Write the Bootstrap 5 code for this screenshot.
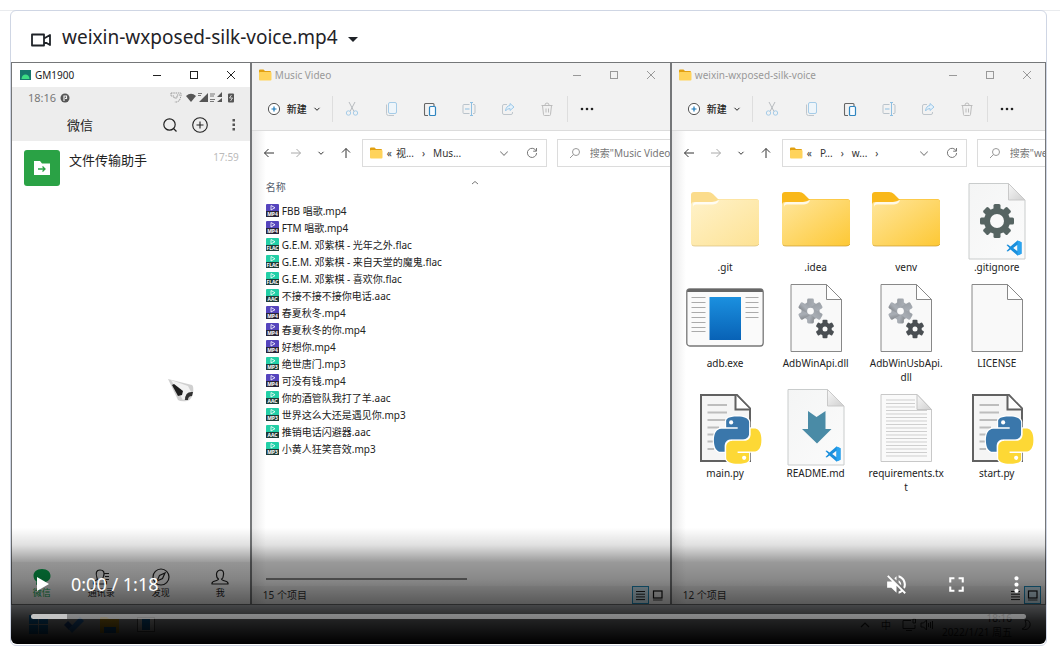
<!DOCTYPE html>
<html lang="zh-CN">
<head>
<meta charset="utf-8">
<meta name="viewport" content="width=device-width, initial-scale=1">
<title>weixin-wxposed-silk-voice.mp4</title>
<link rel="stylesheet" href="https://cdn.jsdelivr.net/npm/bootstrap@5.3.0/dist/css/bootstrap.min.css">
<script src="https://cdn.jsdelivr.net/npm/bootstrap@5.3.0/dist/js/bootstrap.bundle.min.js"></script>
<style>
body{font-family:"Noto Sans","Noto Sans CJK SC",sans-serif;color:#1f2328;background:#fff}
button{background:none;border:0;padding:0;color:inherit;display:flex;align-items:center;justify-content:center}
svg{display:block;flex:none}
.page{border-top:1px solid #e9ebee;margin-top:10px;padding:0 13px 0 10px}
.video-card{border:1px solid #cfd6e4;border-radius:6px;margin-top:-1px;background:#fff;padding-bottom:1px}
.file-head{height:51px;padding:2px 20px 0;gap:11px}
.file-head button{font-size:19px;gap:10px}
.caret{border:5px solid transparent;border-top-color:#1f2328;border-bottom:0;margin-top:3px}
.player{aspect-ratio:1035/582;overflow:hidden;border-radius:0 0 6px 6px;font-size:10px;line-height:14px;color:#222}
.desk{flex:1;min-height:0;border:1px solid #757779}
.phone{flex:239;min-width:0}
.win{flex:420;min-width:0;border-left:2px solid #757779;overflow:hidden}
.win.narrow{flex:375}
.titlebar{height:24px;flex:none}
.win .titlebar,.tools{background:#f2f2f2;color:#999}
.win .titlebar{padding-left:6px}
.win .titlebar span{margin-left:3px}
.wbtn{width:37px;height:22px}
.phone-top{background:#ededed;flex:none}
.status-row{height:21px;padding:0 14px 0 16px;color:#777;font-size:11px}
.app-row{height:33px;font-size:13px;padding:0 11px 0 55px}
.plus-btn{margin:0 21px 0 14px}
.avatar{width:36px;height:36px;background:#2aa245;border-radius:3px}
.chat{padding:9px 11px 0 12px;gap:9px}
.chat .who{font-size:13px;line-height:20px}
.chat .when{color:#bbb;font-size:10px}
.tabs-row{height:42px;background:#f7f7f7;flex:none}
.tabs-row button{flex-direction:column;gap:1px;flex:1;font-size:9px;line-height:12px;justify-content:start;padding-top:6px}
.tabs-row .current{color:#07a850}
.tools{height:44px;flex:none;border-bottom:1px solid #dcdcdc;padding-left:17px}
.tools .sep{width:1px;height:26px;background:#dedede}
.new-btn{gap:6px;color:#222;width:50px;margin-right:13px}
.tool{width:39px;height:28px}
.addr{height:44px;flex:none;background:linear-gradient(90deg,#e9e9e9,#fff 14px);color:#333}
.navs{width:110px;padding:0 10px 0 11px;flex:none}
.crumbs{border:1px solid #dcdcdc;width:185px;height:28px;padding:0 8px 0 6px;flex:none;background:#fff}
.search-box{border:1px solid #dcdcdc;height:28px;width:150px;flex:none;margin-left:10px;padding-left:11px;gap:9px;background:#fff}
.search-box input{border:0;outline:0;background:none;width:110px;padding:0;font-size:10px;color:#666}
.search-box input::placeholder{color:#777;opacity:1}
.pane{flex:1;min-height:0;background:linear-gradient(90deg,#e9e9e9,#fff 14px);padding-left:14px}
.names{margin:0;padding:0;list-style:none}
.names li{height:17px;gap:3px;white-space:nowrap;display:flex;align-items:center}
.colhead{color:#55606e;padding-top:5px;height:27px}
.sort-mark{margin-right:191px}
.tiles{display:grid;grid-template-columns:repeat(4,1fr);row-gap:4px;padding:7px 3px 0 8px;align-content:start}
.tile{text-align:center;overflow-wrap:anywhere}
.tile svg{margin:0 auto}
.tile span{display:block;padding:0 6px}
.statusbar{height:18px;flex:none;background:linear-gradient(90deg,#e0e0e0,#f5f5f5 14px);padding-left:11px;color:#333}
.vbtn{width:17px;height:18px;border:1px solid transparent}
.vbtn.on{border-color:#1e8fc0;background:#cfe9f5}
.hbar{height:2px;width:201px;background:#8a8a8a;margin-bottom:6px}
.taskbar{height:39px;flex:none;background:#c6cacf;padding:0 15px 0 9px}
.taskbar .app{width:36px;height:36px}
.tray{gap:11px}
.shade{inset:0;background:linear-gradient(180deg,transparent 80%,rgba(0,0,0,.12) 83%,rgba(0,0,0,.4) 86%,rgba(0,0,0,.47) 89%,rgba(0,0,0,.63) 93%,rgba(0,0,0,.84) 96%,#000 100%)}
.bar{height:30px;padding:0 0 0 14px;color:#fff}
.bar .clock{font-size:18px;line-height:30px;margin-left:14px}
.bar .ctl{width:60px;height:30px}
.seek{appearance:none;-webkit-appearance:none;display:block;height:5px;margin:15px 20px 25px;width:calc(100% - 40px);border-radius:3px;background:linear-gradient(90deg,#c2c2c2 36px,rgba(255,255,255,.42) 36px)}
.seek::-webkit-slider-thumb{-webkit-appearance:none;width:1px;height:5px;opacity:0}
.pointer{left:157px;top:316px}
</style>
</head>
<body>
<svg width="0" height="0" class="position-absolute" aria-hidden="true">
<defs>
<linearGradient id="gy" x2="1" y2="1"><stop stop-color="#ffe69b"/><stop offset="1" stop-color="#fdc835"/></linearGradient>
<linearGradient id="gp" x2="1" y2="1"><stop stop-color="#fff2c9"/><stop offset="1" stop-color="#fde294"/></linearGradient>
<linearGradient id="gb" x2="0" y2="1"><stop stop-color="#1b90df"/><stop offset="1" stop-color="#0862b6"/></linearGradient>
<linearGradient id="gg" x2="1" y2="1"><stop stop-color="#9a9fa5"/><stop offset=".6" stop-color="#a9aeb5"/><stop offset="1" stop-color="#85898e"/></linearGradient>
<linearGradient id="gw" x2="1" y2="1"><stop stop-color="#f4f5f5"/><stop offset="1" stop-color="#fbfbfb"/></linearGradient>
<linearGradient id="gc" x1="0" x2="1" y2="1"><stop stop-color="#f8f8f8"/><stop offset="1" stop-color="#cfcfcf"/></linearGradient>
</defs>
<symbol id="min" viewBox="0 0 12 12"><path d="M2 6.500h8" fill="none" stroke="currentColor"/></symbol>
<symbol id="max" viewBox="0 0 12 12"><rect x="2.500" y="2.500" width="7" height="7" fill="none" stroke="currentColor"/></symbol>
<symbol id="cls" viewBox="0 0 12 12"><path d="M2 2l8 8M10 2l-8 8" fill="none" stroke="currentColor"/></symbol>
<symbol id="fold" viewBox="0 0 14 12"><path d="M1 1.500q0-1 1-1h3.500l1.500 1.500h5q1 0 1 1V6H1z" fill="#e2a112"/><rect x="1" y="3" width="12.500" height="8.500" rx="1" fill="#ffd35a"/></symbol>
<symbol id="plus" viewBox="0 0 14 14"><circle cx="7" cy="7" r="5.600" fill="#fff" stroke="#555"/><path d="M7 4.500v5M4.500 7h5" stroke="#1676b8" stroke-width="1.200"/></symbol>
<symbol id="down" viewBox="0 0 8 8"><path d="M1.500 2.800L4 5.300l2.500-2.500" fill="none" stroke="currentColor"/></symbol>
<symbol id="cut" viewBox="0 0 14 16"><path d="M4 1l5 9.500M10 1L5 10.500" fill="none" stroke="#b7bbbf"/><circle cx="3.500" cy="12" r="2.200" fill="none" stroke="#a5cce8"/><circle cx="10.500" cy="12" r="2.200" fill="none" stroke="#a5cce8"/></symbol>
<symbol id="copy" viewBox="0 0 14 16"><rect x="4.500" y="1.500" width="8" height="11" rx="1.500" fill="#eef5fa" stroke="#a5cce8"/><path d="M2.500 3.500v9q0 2 2 2h5.500" fill="none" stroke="#bfc6cc"/></symbol>
<symbol id="paste" viewBox="0 0 14 16"><path d="M5 14.500H2.500q-1 0-1-1v-10q0-1 1-1H10q1 0 1 1V5M4 2.500h4.500" fill="none" stroke="#666" stroke-width="1.100"/><rect x="6.500" y="5.500" width="6" height="9" rx="1" fill="#f7fbff" stroke="#2f86c0" stroke-width="1.200"/></symbol>
<symbol id="ren" viewBox="0 0 14 16"><path d="M7.500 3.500H2q-1 0-1 1v7q0 1 1 1h5.500M11 3.500h1q1 0 1 1v7q0 1-1 1h-1" fill="none" stroke="#b9c3cb"/><path d="M9.500 2v12M8 1.500h3M8 14.500h3M3 8h4.500" fill="none" stroke="#8dbfe2"/></symbol>
<symbol id="share" viewBox="0 0 14 16"><path d="M6 3.500H3q-1.500 0-1.500 1.500v7q0 1.500 1.500 1.500h7q1.500 0 1.500-1.500v-1" fill="none" stroke="#bfc6cc"/><path d="M9 2.500l4 3.500-4 3.500V7.500Q6 7.500 4.500 10 5 5 9 4.500z" fill="#e6f2fb" stroke="#9cc8e8"/></symbol>
<symbol id="bin" viewBox="0 0 14 16"><path d="M1.500 4.500h11M5 4q0-2 2-2t2 2M2.500 4.500l1 9q0 1 1 1h5q1 0 1-1l1-9M6 7.500v4M8.500 7.500v4" fill="none" stroke="#bcbcbc"/></symbol>
<symbol id="left" viewBox="0 0 12 12"><path d="M11 6H1.500M5.500 2l-4 4 4 4" fill="none" stroke="currentColor"/></symbol>
<symbol id="right" viewBox="0 0 12 12"><path d="M1 6h9.500M6.500 2l4 4-4 4" fill="none" stroke="#aaa"/></symbol>
<symbol id="up" viewBox="0 0 12 12"><path d="M6 11V1.500M2 5.500l4-4 4 4" fill="none" stroke="currentColor"/></symbol>
<symbol id="ref" viewBox="0 0 12 12"><path d="M10.200 4A4.600 4.600 0 1 0 10.600 6M10.500 1v3.200H7.200" fill="none" stroke="#777"/></symbol>
<symbol id="mag" viewBox="0 0 12 12"><circle cx="7" cy="5" r="3.500" fill="none" stroke="#999"/><path d="M4.500 7.500L1 11" stroke="#999"/></symbol>
<symbol id="mp4" viewBox="0 0 13 13"><rect width="13" height="13" rx="1" fill="#5544bd"/><path d="M5 1.500l4 2.200-4 2.300z" fill="none" stroke="#fff" stroke-width=".8"/><rect y="7" width="13" height="6" fill="#282438"/><text x="6.500" y="12" font-size="5" font-weight="700" text-anchor="middle" fill="#fff">MP4</text></symbol>
<symbol id="flac" viewBox="0 0 13 13"><rect width="13" height="13" rx="1" fill="#22cfa6"/><path d="M5 1.500l4 2.200-4 2.300z" fill="none" stroke="#fff" stroke-width=".8"/><rect y="7" width="13" height="6" fill="#1d3b38"/><text x="6.500" y="12" font-size="5" font-weight="700" text-anchor="middle" fill="#fff">FLAC</text></symbol>
<symbol id="aac" viewBox="0 0 13 13"><rect width="13" height="13" rx="1" fill="#22cfa6"/><path d="M5 1.500l4 2.200-4 2.300z" fill="none" stroke="#fff" stroke-width=".8"/><rect y="7" width="13" height="6" fill="#1d3b38"/><text x="6.500" y="12" font-size="5" font-weight="700" text-anchor="middle" fill="#fff">AAC</text></symbol>
<symbol id="mp3" viewBox="0 0 13 13"><rect width="13" height="13" rx="1" fill="#22cfa6"/><path d="M5 1.500l4 2.200-4 2.300z" fill="none" stroke="#fff" stroke-width=".8"/><rect y="7" width="13" height="6" fill="#1d3b38"/><text x="6.500" y="12" font-size="5" font-weight="700" text-anchor="middle" fill="#fff">MP3</text></symbol>
<symbol id="bigfold" viewBox="0 0 78 78"><path d="M5 13q0-3 3-3h14q3 0 5 2l5 5h38q3 0 3 3v10H5z" fill="#f9b81a"/><path d="M5 23q0-3 3-3h18q2 0 4-1l3-1.500h37q3 0 3 3V61q0 3-3 3H8q-3 0-3-3z" fill="url(#gy)"/><path d="M7 23q0-3 3-3h16q4 0 7-2-1 4-6 4.500H10q-3 0-3 3z" fill="#fff" opacity=".8"/><path d="M6 63q1 1 3 1h60q3 0 4-2" fill="none" stroke="#c99a2d" opacity=".7"/></symbol>
<symbol id="palefold" viewBox="0 0 78 78"><path d="M5 13q0-3 3-3h14q3 0 5 2l5 5h38q3 0 3 3v10H5z" fill="#fbdc8c"/><path d="M5 23q0-3 3-3h18q2 0 4-1l3-1.500h37q3 0 3 3V61q0 3-3 3H8q-3 0-3-3z" fill="url(#gp)"/><path d="M7 23q0-3 3-3h16q4 0 7-2-1 4-6 4.500H10q-3 0-3 3z" fill="#fff" opacity=".8"/><path d="M6 63q1 1 3 1h60q3 0 4-2" fill="none" stroke="#d8bf7d" opacity=".7"/></symbol>
<symbol id="gear8" viewBox="-18 -18 36 36"><g fill="#566462"><circle r="13"/><rect x="-3.500" y="-17" width="7" height="34" rx="1.500"/><rect x="-17" y="-3.500" width="34" height="7" rx="1.500"/><g transform="rotate(45)"><rect x="-3.500" y="-17" width="7" height="34" rx="1.500"/><rect x="-17" y="-3.500" width="34" height="7" rx="1.500"/></g></g><circle r="7" fill="#fafafa"/></symbol>
<symbol id="gear6" viewBox="-14 -14 28 28"><circle r="9.500"/><rect x="-3.500" y="-13" width="7" height="26" rx="1.500"/><rect x="-3.500" y="-13" width="7" height="26" rx="1.500" transform="rotate(60)"/><rect x="-3.500" y="-13" width="7" height="26" rx="1.500" transform="rotate(120)"/><circle r="3.500" fill="#fafafa"/></symbol>
<symbol id="vsc" viewBox="0 0 16 16"><path d="M11.500.5L15.500 2.300v11.400L11.500 15.500 4.500 9.500 1.800 11.600.5 11 3.500 8 .5 5l1.300-.6L4.500 6.500zM11.500 4.700L7.200 8l4.300 3.300z" fill="#1b8fdc" fill-rule="evenodd"/><path d="M11.500.5L15.500 2.300v11.400L11.500 15.500z" fill="#2aa4f0"/></symbol>
<symbol id="bigdoc" viewBox="0 0 78 78"><path d="M11 1.500h39.500L67 18v59H11z" fill="url(#gw)" stroke="#c9cccc"/><path d="M50.500 1.500L67 18H50.500z" fill="url(#gc)" stroke="#c9c9c9"/></symbol>
<symbol id="doc" viewBox="0 0 78 78"><path d="M14 6.500h35.500l15 15V73.500H14z" fill="#f9f9f9" stroke="#888"/><path d="M49.500 6.500v15h15z" fill="#fff" stroke="#888"/></symbol>
<symbol id="dll" viewBox="0 0 78 78"><use href="#doc" width="78" height="78"/><use href="#gear6" x="20" y="19.500" width="27" height="27" fill="url(#gg)"/><use href="#gear6" x="38" y="41" width="20" height="20" fill="#4a4f53"/></symbol>
<symbol id="exe" viewBox="0 0 78 78"><rect x=".8" y="11" width="76.400" height="57" rx="3" fill="#fafafa" stroke="#777" stroke-width="1.300"/><path d="M1 14q0-3 3-3h70q3 0 3 3z" fill="#666"/><rect x="23.500" y="19" width="31.500" height="43" fill="url(#gb)"/><path d="M5.500 19.500h14M5.500 24.500h14M5.500 29.500h14M5.500 34.500h14M5.500 39.500h14M5.500 44.500h14M5.500 49.500h14M5.500 53.500h14M59.500 19.500h13M59.500 24.500h13M59.500 29.500h13M59.500 34.500h13M59.500 39.500h13" stroke="#aaa"/></symbol>
<symbol id="gitig" viewBox="0 0 78 78"><use href="#bigdoc" width="78" height="78"/><use href="#gear8" x="21" y="21" width="36" height="36"/><use href="#vsc" x="48" y="58" width="16" height="16"/></symbol>
<symbol id="readme" viewBox="0 0 78 78"><use href="#bigdoc" width="78" height="78"/><path d="M31 23l8.500 6 9-6v18H54.500L40 55.500 25 41h6z" fill="#4a8ba6"/><use href="#vsc" x="48" y="58" width="16" height="16"/></symbol>
<symbol id="txt" viewBox="0 0 78 78"><path d="M14 6.500h36l14.500 15V73.500H14z" fill="#fafafa" stroke="#c8c8c8"/><path d="M19 12h29M19 15.500h29M19 19h29M19 22.500h41M19 26h41M19 29.500h41M19 33h41M19 36.500h41M19 40h41M19 43.500h41M19 47h41M19 50.500h41M19 54h41M19 57.500h41M19 61h41M19 64.500h41M19 68h41" stroke="#cfcfcf"/><path d="M50 6.500V21.500h14.500z" fill="url(#gc)" stroke="#c4c4c4"/></symbol>
<symbol id="py" viewBox="0 0 78 78"><path d="M15 7h36l13 13.500V73H15z" fill="#f5f5f5" stroke="#616161" stroke-width="2"/><path d="M49.500 7v14.500H64" fill="#fff" stroke="#616161" stroke-width="2"/><path d="M21.500 17H41M21.500 24.500H41M21.500 32H41M21.500 39.500H33M21.500 46.500H28M21.500 53.500H28M21.500 61H28" stroke="#bdbdbd" stroke-width="2"/>
<g transform="translate(28 28.500) scale(1.970)" stroke-linejoin="round"><path stroke="#fff" stroke-width="1.200" paint-order="stroke" fill="#3a77ab" d="M14.250.180l.9.200.730.260.590.300.450.320.340.340.250.340.160.330.1.300.040.260.020.200-.010.130V8.500l-.050.630-.130.550-.210.460-.260.380-.300.310-.330.250-.350.190-.350.140-.330.100-.300.070-.260.040-.210.020H8.770l-.690.050-.590.140-.500.220-.410.270-.330.320-.270.350-.200.360-.150.370-.100.350-.070.320-.040.270-.020.210v3.060H3.170l-.210-.030-.280-.070-.320-.120-.350-.180-.360-.260-.360-.360-.350-.460-.320-.590-.280-.730-.210-.880-.140-1.050-.050-1.230.060-1.220.160-1.040.240-.870.320-.710.360-.570.400-.440.420-.330.420-.240.400-.160.360-.100.320-.050.240-.010h.160l.060.010h8.160v-.830H6.180l-.010-2.750-.020-.370.050-.340.110-.310.170-.280.250-.260.310-.230.380-.200.440-.180.510-.150.580-.120.640-.100.710-.060.770-.040.840-.020 1.270.050z"/><path stroke="#fff" stroke-width="1.200" paint-order="stroke" fill="#fdd835" d="M21.040 6.110l.280.060.320.120.350.180.360.270.360.350.350.470.320.590.280.730.210.880.140 1.040.050 1.230-.060 1.230-.160 1.040-.240.860-.320.710-.360.570-.400.450-.420.330-.420.240-.400.160-.360.090-.320.050-.240.020-.160-.010h-8.220v.820h5.840l.010 2.760.020.360-.050.340-.110.310-.170.290-.250.250-.310.240-.380.200-.440.170-.510.150-.580.130-.640.090-.710.070-.770.040-.840.010-1.270-.040-1.070-.140-.900-.200-.730-.250-.590-.300-.450-.330-.340-.340-.250-.340-.160-.330-.100-.300-.040-.250-.020-.200.010-.130v-5.340l.050-.640.130-.540.210-.460.260-.380.300-.320.330-.240.350-.200.350-.140.330-.100.300-.060.260-.040.210-.020.130-.010h5.840l.690-.050.590-.140.500-.210.410-.280.330-.320.270-.350.200-.360.150-.360.100-.350.070-.320.040-.280.020-.210V6.070h2.090l.140.010z"/><circle cx="8.700" cy="3" r="1.050" fill="#fff"/><circle cx="15.300" cy="21" r="1.050" fill="#fff"/></g></symbol>
<symbol id="vlist" viewBox="0 0 11 11"><path d="M1 1.500h9M1 4.200h9M1 6.900h9M1 9.600h9" stroke="#222"/></symbol>
<symbol id="vbig" viewBox="0 0 11 11"><rect x="1.500" y="1" width="8.500" height="7" fill="none" stroke="#111" stroke-width="1.200"/><path d="M1 10h9.500" stroke="#444"/></symbol>
</svg>

<main class="page">
<section class="video-card">
  <header class="file-head d-flex align-items-center">
    <svg class="mt-1" width="20" height="14" viewBox="0 0 20 14"><path d="M1 1.500h12v11H1zM13 5.500l6-3.500v10l-6-3.500" fill="none" stroke="#1f2328" stroke-width="1.800" stroke-linejoin="round"/></svg>
    <button type="button" aria-expanded="true"><span>weixin-wxposed-silk-voice.mp4</span><span class="caret"></span></button>
  </header>

  <div class="player position-relative d-flex flex-column">
    <div class="desk d-flex">

      <section class="phone d-flex flex-column bg-white">
        <div class="titlebar d-flex align-items-center ps-2">
          <svg width="11" height="10" viewBox="0 0 11 10"><rect width="11" height="10" fill="#17776b"/><path d="M1.500 9a4 4.500 0 0 1 8 0z" fill="#3ddc84"/></svg>
          <span class="ms-1 me-auto">GM1900</span>
          <button class="wbtn" aria-label="最小化"><svg width="12" height="12"><use href="#min"/></svg></button>
          <button class="wbtn" aria-label="最大化"><svg width="12" height="12"><use href="#max"/></svg></button>
          <button class="wbtn" aria-label="关闭"><svg width="12" height="12"><use href="#cls"/></svg></button>
        </div>
        <div class="phone-top">
          <div class="status-row d-flex align-items-center">
            <span>18:16</span>
            <svg class="ms-1 me-auto" width="10" height="10" viewBox="0 0 10 10"><circle cx="5" cy="5" r="4.500" fill="#555"/><path d="M4 8V3h2.500v2.500H5" fill="none" stroke="#eee" stroke-width="1.200"/></svg>
            <svg width="67" height="11" viewBox="0 0 67 11"><path d="M2 1h10v3l-1.500 4.500L8 10H5.500M2 1v3h3v2h3V3h3" fill="none" stroke="#999" stroke-dasharray="1.500 .8"/><path d="M17 4q5-4.500 10 0l-5 6z" fill="#555"/><path d="M39 1v9h-9zM53 0v5h-5zM53 6v4h-5z" fill="#555"/><path d="M29 1.500h4M29 3.500h3M41 2h5M41 4h4M41 7.500h5M41 9.500h4" stroke="#777"/><rect x="59" y="1.500" width="6" height="9" rx="1" fill="#555"/><path d="M62.500 3l-2 3h3l-2 3" stroke="#eee" fill="none" stroke-width=".8"/></svg>
          </div>
          <div class="app-row d-flex align-items-center">
            <span class="me-auto">微信</span>
            <button aria-label="搜索"><svg width="16" height="16" viewBox="0 0 16 16"><circle cx="7.500" cy="7.500" r="5.700" fill="none" stroke="#222" stroke-width="1.200"/><path d="M11.500 11.500l3 3" stroke="#222" stroke-width="1.300"/></svg></button>
            <button class="plus-btn" aria-label="添加"><svg width="16" height="16" viewBox="0 0 16 16"><circle cx="8" cy="8" r="7.300" fill="none" stroke="#222" stroke-width="1.100"/><path d="M8 4.500v7M4.500 8h7" stroke="#222" stroke-width="1.100"/></svg></button>
            <button aria-label="更多"><svg width="10" height="14" viewBox="0 0 10 14"><g fill="#555"><rect x="3.500" y="1" width="2.500" height="2.500"/><rect x="3.500" y="5.500" width="2.500" height="2.500"/><rect x="3.500" y="10" width="2.500" height="2.500"/></g></svg></button>
          </div>
        </div>
        <div class="chat d-flex flex-fill">
          <div class="avatar d-flex align-items-center justify-content-center flex-shrink-0"><svg width="18" height="16" viewBox="0 0 18 16"><path d="M1 1h6l2 2.500h8V15H1z" fill="#fff"/><path d="M5 9h7M9.500 6.500L12 9l-2.500 2.500" fill="none" stroke="#2aa245" stroke-width="1.300"/></svg></div>
          <span class="who me-auto">文件传输助手</span><span class="when">17:59</span>
        </div>
        <nav class="tabs-row d-flex">
          <button class="current"><svg width="20" height="18" viewBox="0 0 20 18"><path d="M10 1C4.500 1 1.500 4 1.500 8c0 3 2 5 3 5.500L4 17l4-2.500h2c5 0 8.500-2.500 8.500-6.500S15.500 1 10 1z" fill="#07a850"/></svg>微信</button>
          <button><svg width="18" height="18" viewBox="0 0 18 18"><path d="M5 10Q2.500 2 8 2t3.500 6.500q-1 2-1 3l4 2V16H1.500v-2.500l4-2zM12.500 5.500H17M13 8.500h4M13.500 11.500H17" fill="none" stroke="#222" stroke-width="1.200"/></svg>通讯录</button>
          <button><svg width="18" height="18" viewBox="0 0 18 18"><circle cx="9" cy="9" r="8" fill="none" stroke="#222" stroke-width="1.200"/><path d="M13 5l-2.500 5.500L5 13l2.500-5.500z" fill="none" stroke="#222" stroke-width="1.200"/></svg>发现</button>
          <button><svg width="18" height="18" viewBox="0 0 18 18"><path d="M9 2q4 0 3.500 4.500T10.500 11q0 1 3.500 2t3 3H1q-.500-2 3-3t3.500-2Q5.500 10 5.500 6.500T9 2z" fill="none" stroke="#222" stroke-width="1.200"/></svg>我</button>
        </nav>
      </section>

      <section class="win d-flex flex-column">
        <div class="titlebar d-flex align-items-center">
          <svg width="14" height="12"><use href="#fold"/></svg><span class="me-auto">Music Video</span>
          <button class="wbtn" aria-label="最小化"><svg width="12" height="12"><use href="#min"/></svg></button>
          <button class="wbtn" aria-label="最大化"><svg width="12" height="12"><use href="#max"/></svg></button>
          <button class="wbtn" aria-label="关闭"><svg width="12" height="12"><use href="#cls"/></svg></button>
        </div>
        <div class="tools d-flex align-items-center">
          <button class="new-btn"><svg width="14" height="14"><use href="#plus"/></svg><span class="text-nowrap fw-medium">新建</span><svg width="8" height="8"><use href="#down"/></svg></button>
          <span class="sep"></span>
          <button class="tool" aria-label="剪切"><svg width="14" height="16"><use href="#cut"/></svg></button>
          <button class="tool" aria-label="复制"><svg width="14" height="16"><use href="#copy"/></svg></button>
          <button class="tool" aria-label="粘贴"><svg width="14" height="16"><use href="#paste"/></svg></button>
          <button class="tool" aria-label="重命名"><svg width="14" height="16"><use href="#ren"/></svg></button>
          <button class="tool" aria-label="共享"><svg width="14" height="16"><use href="#share"/></svg></button>
          <button class="tool" aria-label="删除"><svg width="14" height="16"><use href="#bin"/></svg></button>
          <span class="sep"></span>
          <button class="tool" aria-label="更多"><svg width="14" height="4" viewBox="0 0 14 4"><g fill="#222"><circle cx="2" cy="2" r="1.300"/><circle cx="7" cy="2" r="1.300"/><circle cx="12" cy="2" r="1.300"/></g></svg></button>
        </div>
        <div class="addr d-flex align-items-center">
          <div class="navs d-flex align-items-center justify-content-between">
            <button aria-label="后退"><svg width="12" height="12"><use href="#left"/></svg></button><button aria-label="前进"><svg width="12" height="12"><use href="#right"/></svg></button><button aria-label="历史"><svg width="8" height="8"><use href="#down"/></svg></button><button aria-label="上移"><svg width="12" height="12"><use href="#up"/></svg></button>
          </div>
          <div class="crumbs d-flex align-items-center">
            <svg width="14" height="12"><use href="#fold"/></svg><span class="ms-1">«</span><span class="ms-1">视...</span><span class="ms-2">›</span><span class="ms-2 me-auto">Mus...</span>
            <button class="me-3" aria-label="展开"><svg width="12" height="12" viewBox="0 0 8 8"><path d="M1.500 3L4 5.500 6.500 3" fill="none" stroke="#888" stroke-width=".7"/></svg></button><button aria-label="刷新"><svg width="12" height="12"><use href="#ref"/></svg></button>
          </div>
          <label class="search-box d-flex align-items-center"><svg width="12" height="12"><use href="#mag"/></svg><input type="text" aria-label="搜索" placeholder='搜索"Music Video"'></label>
        </div>
        <div class="pane d-flex flex-column">
          <div class="colhead d-flex"><span class="me-auto">名称</span><svg class="sort-mark" width="8" height="6" viewBox="0 0 8 6"><path d="M1 4l3-2.500L7 4" fill="none" stroke="#777"/></svg></div>
          <ul class="names mb-auto">
            <li><svg width="13" height="13"><use href="#mp4"/></svg>FBB 唱歌.mp4</li>
            <li><svg width="13" height="13"><use href="#mp4"/></svg>FTM 唱歌.mp4</li>
            <li><svg width="13" height="13"><use href="#flac"/></svg>G.E.M. 邓紫棋 - 光年之外.flac</li>
            <li><svg width="13" height="13"><use href="#flac"/></svg>G.E.M. 邓紫棋 - 来自天堂的魔鬼.flac</li>
            <li><svg width="13" height="13"><use href="#flac"/></svg>G.E.M. 邓紫棋 - 喜欢你.flac</li>
            <li><svg width="13" height="13"><use href="#aac"/></svg>不接不接不接你电话.aac</li>
            <li><svg width="13" height="13"><use href="#mp4"/></svg>春夏秋冬.mp4</li>
            <li><svg width="13" height="13"><use href="#mp4"/></svg>春夏秋冬的你.mp4</li>
            <li><svg width="13" height="13"><use href="#mp4"/></svg>好想你.mp4</li>
            <li><svg width="13" height="13"><use href="#mp3"/></svg>绝世唐门.mp3</li>
            <li><svg width="13" height="13"><use href="#mp4"/></svg>可没有钱.mp4</li>
            <li><svg width="13" height="13"><use href="#aac"/></svg>你的酒管队我打了羊.aac</li>
            <li><svg width="13" height="13"><use href="#mp3"/></svg>世界这么大还是遇见你.mp3</li>
            <li><svg width="13" height="13"><use href="#aac"/></svg>推销电话闪避器.aac</li>
            <li><svg width="13" height="13"><use href="#mp3"/></svg>小黄人狂笑音效.mp3</li>
          </ul>
          <div class="hbar"></div>
        </div>
        <div class="statusbar d-flex align-items-center">
          <span class="me-auto">15 个项目</span>
          <button class="vbtn on" aria-label="列表"><svg width="11" height="11"><use href="#vlist"/></svg></button><button class="vbtn me-1" aria-label="图标"><svg width="11" height="11"><use href="#vbig"/></svg></button>
        </div>
      </section>

      <section class="win narrow d-flex flex-column">
        <div class="titlebar d-flex align-items-center">
          <svg width="14" height="12"><use href="#fold"/></svg><span class="me-auto">weixin-wxposed-silk-voice</span>
          <button class="wbtn" aria-label="最小化"><svg width="12" height="12"><use href="#min"/></svg></button>
          <button class="wbtn" aria-label="最大化"><svg width="12" height="12"><use href="#max"/></svg></button>
          <button class="wbtn" aria-label="关闭"><svg width="12" height="12"><use href="#cls"/></svg></button>
        </div>
        <div class="tools d-flex align-items-center">
          <button class="new-btn"><svg width="14" height="14"><use href="#plus"/></svg><span class="text-nowrap fw-medium">新建</span><svg width="8" height="8"><use href="#down"/></svg></button>
          <span class="sep"></span>
          <button class="tool" aria-label="剪切"><svg width="14" height="16"><use href="#cut"/></svg></button>
          <button class="tool" aria-label="复制"><svg width="14" height="16"><use href="#copy"/></svg></button>
          <button class="tool" aria-label="粘贴"><svg width="14" height="16"><use href="#paste"/></svg></button>
          <button class="tool" aria-label="重命名"><svg width="14" height="16"><use href="#ren"/></svg></button>
          <button class="tool" aria-label="共享"><svg width="14" height="16"><use href="#share"/></svg></button>
          <button class="tool" aria-label="删除"><svg width="14" height="16"><use href="#bin"/></svg></button>
          <span class="sep"></span>
          <button class="tool" aria-label="更多"><svg width="14" height="4" viewBox="0 0 14 4"><g fill="#222"><circle cx="2" cy="2" r="1.300"/><circle cx="7" cy="2" r="1.300"/><circle cx="12" cy="2" r="1.300"/></g></svg></button>
        </div>
        <div class="addr d-flex align-items-center">
          <div class="navs d-flex align-items-center justify-content-between">
            <button aria-label="后退"><svg width="12" height="12"><use href="#left"/></svg></button><button aria-label="前进"><svg width="12" height="12"><use href="#right"/></svg></button><button aria-label="历史"><svg width="8" height="8"><use href="#down"/></svg></button><button aria-label="上移"><svg width="12" height="12"><use href="#up"/></svg></button>
          </div>
          <div class="crumbs d-flex align-items-center">
            <svg width="14" height="12"><use href="#fold"/></svg><span class="ms-1">«</span><span class="ms-2">P...</span><span class="ms-2">›</span><span class="ms-2">w...</span><span class="ms-2 me-auto">›</span>
            <button class="me-3" aria-label="展开"><svg width="12" height="12" viewBox="0 0 8 8"><path d="M1.500 3L4 5.500 6.500 3" fill="none" stroke="#888" stroke-width=".7"/></svg></button><button aria-label="刷新"><svg width="12" height="12"><use href="#ref"/></svg></button>
          </div>
          <label class="search-box d-flex align-items-center"><svg width="12" height="12"><use href="#mag"/></svg><input type="text" aria-label="搜索" placeholder='搜索"weixin'></label>
        </div>
        <div class="pane tiles">
          <div class="tile"><svg width="78" height="78"><use href="#palefold"/></svg><span>.git</span></div>
          <div class="tile"><svg width="78" height="78"><use href="#bigfold"/></svg><span>.idea</span></div>
          <div class="tile"><svg width="78" height="78"><use href="#bigfold"/></svg><span>venv</span></div>
          <div class="tile"><svg width="78" height="78"><use href="#gitig"/></svg><span>.gitignore</span></div>
          <div class="tile"><svg width="78" height="78"><use href="#exe"/></svg><span>adb.exe</span></div>
          <div class="tile"><svg width="78" height="78"><use href="#dll"/></svg><span>AdbWinApi.dll</span></div>
          <div class="tile"><svg width="78" height="78"><use href="#dll"/></svg><span>AdbWinUsbApi.<wbr>dll</span></div>
          <div class="tile"><svg width="78" height="78"><use href="#doc"/></svg><span>LICENSE</span></div>
          <div class="tile"><svg width="78" height="78"><use href="#py"/></svg><span>main.py</span></div>
          <div class="tile"><svg width="78" height="78"><use href="#readme"/></svg><span>README.md</span></div>
          <div class="tile"><svg width="78" height="78"><use href="#txt"/></svg><span>requirements.tx<wbr>t</span></div>
          <div class="tile"><svg width="78" height="78"><use href="#py"/></svg><span>start.py</span></div>
        </div>
        <div class="statusbar d-flex align-items-center">
          <span class="me-auto">12 个项目</span>
          <button class="vbtn" aria-label="列表"><svg width="11" height="11"><use href="#vlist"/></svg></button><button class="vbtn on me-1" aria-label="图标"><svg width="11" height="11"><use href="#vbig"/></svg></button>
        </div>
      </section>
    </div>

    <div class="taskbar d-flex align-items-center">
      <span class="app d-flex align-items-center justify-content-center"><svg width="19" height="19" viewBox="0 0 19 19"><path d="M0 0h9v9H0zM10 0h9v9h-9zM0 10h9v9H0zM10 10h9v9h-9z" fill="#0f83d6"/></svg></span>
      <span class="app d-flex align-items-center justify-content-center"><svg width="20" height="16" viewBox="0 0 20 16"><path d="M0 8l4-4 5 5-4 4z" fill="#1d53a8"/><path d="M4.500 12L16 0l4 4L8 16z" fill="#2f86e0"/></svg></span>
      <span class="app d-flex align-items-center justify-content-center"><svg width="20" height="16" viewBox="0 0 20 16"><path d="M0 1q0-1 1-1h6l2 2h10v14H0z" fill="#f0b820"/><path d="M4 10h12v6H4z" fill="#1274c4"/></svg></span>
      <span class="app d-flex align-items-center justify-content-center"><svg width="18" height="15" viewBox="0 0 18 15"><rect x=".5" y=".5" width="17" height="14" fill="#eee" stroke="#666"/><path d="M5 2h8v11H5z" fill="#0f78c8"/></svg></span>
      <div class="tray d-flex align-items-center ms-auto">
        <svg width="10" height="8" viewBox="0 0 10 8"><path d="M1 6l4-4 4 4" fill="none" stroke="#222" stroke-width="1.200"/></svg>
        <span>中</span>
        <svg width="14" height="14" viewBox="0 0 14 14"><path d="M9 2.500H1v8h12V7M4 12.500h6M11 1h2.500v4H11z" fill="none" stroke="#222"/></svg>
      </div>
      <svg class="ms-1" width="14" height="12" viewBox="0 0 14 12"><path d="M1 4h2.500L6.500 1v10l-3-3H1zM8.500 4v4M10.500 3v6M12.500 2v8" fill="none" stroke="#222"/></svg>
      <span class="ms-2 text-end">18:16<br>2022/1/21 周五</span>
      <svg class="ms-2" width="11" height="12" viewBox="0 0 11 12"><path d="M5 1q6 0 5 6-2 5-8 3 6-2 3-9z" fill="none" stroke="#222"/></svg>
    </div>

    <svg class="pointer position-absolute" width="27" height="26" viewBox="0 0 27 26"><path d="M0 1L24 7q2 1 1 9-2 6-6 7-6 1-9-1z" fill="#d0d0d0"/><path d="M3 2l17 6 4 8-9 6z" fill="#f2f2f2"/><path d="M4 7l2-1 9 7-1 4-4 1z" fill="#1f1f1f"/><path d="M17 22q0-9 8-8l-1 4q-4 0-4 4z" fill="#333"/></svg>

    <div class="shade position-absolute d-flex flex-column justify-content-end">
      <div class="bar d-flex align-items-center">
        <button aria-label="播放"><svg width="32" height="24" viewBox="0 0 32 24"><path d="M12 5v14l12-7z" fill="#fff"/></svg></button>
        <span class="clock me-auto">0:00 / 1:18</span>
        <button class="ctl" aria-label="取消静音"><svg width="25" height="25" viewBox="0 0 24 24"><path fill="#fff" d="M16.500 12c0-1.770-1.020-3.290-2.500-4.030v2.210l2.450 2.450c.030-.200.050-.410.050-.630zm2.500 0c0 .940-.200 1.820-.540 2.640l1.510 1.510C20.630 14.910 21 13.500 21 12c0-4.280-2.990-7.860-7-8.770v2.060c2.890.860 5 3.540 5 6.710zM4.270 3L3 4.270 7.730 9H3v6h4l5 5v-6.730l4.250 4.250c-.670.520-1.420.930-2.250 1.180v2.060c1.380-.310 2.630-.950 3.690-1.810L19.730 21 21 19.730l-9-9L4.270 3zM12 4L9.910 6.090 12 8.180V4z"/></svg></button>
        <button class="ctl" aria-label="全屏"><svg width="25" height="25" viewBox="0 0 24 24"><path fill="#fff" d="M7 14H5v5h5v-2H7v-3zm-2-4h2V7h3V5H5v5zm12 7h-3v2h5v-5h-2v3zM14 5v2h3v3h2V5h-5z"/></svg></button>
        <button class="ctl" aria-label="更多选项"><svg width="25" height="25" viewBox="0 0 24 24"><path fill="#fff" d="M12 8c1.100 0 2-.9 2-2s-.9-2-2-2-2 .9-2 2 .9 2 2 2zm0 2c-1.100 0-2 .9-2 2s.9 2 2 2 2-.9 2-2-.9-2-2-2zm0 6c-1.100 0-2 .9-2 2s.9 2 2 2 2-.9 2-2-.9-2-2-2z"/></svg></button>
      </div>
      <input class="seek" type="range" min="0" max="78" value="0" aria-label="播放进度">
    </div>
  </div>
</section>
</main>
</body>
</html>
